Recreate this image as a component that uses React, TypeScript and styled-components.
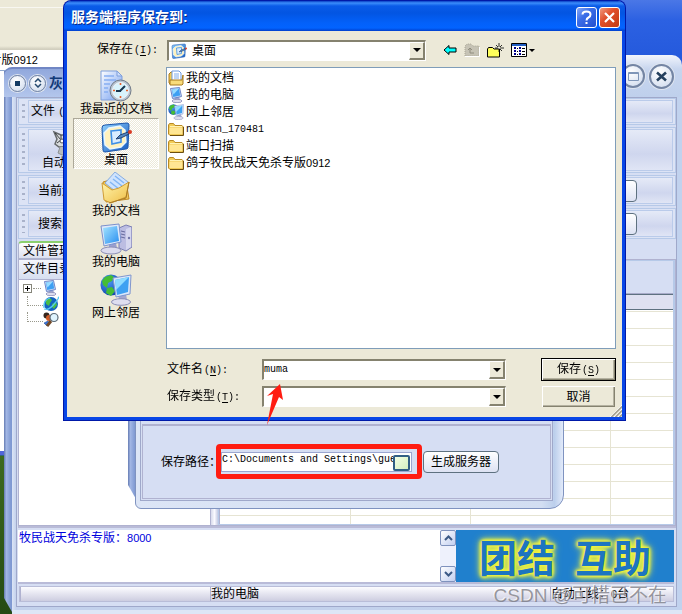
import React from 'react';
import styled, { createGlobalStyle } from 'styled-components';

const Global = createGlobalStyle`
  * { box-sizing: border-box; }
  body { margin: 0; }
  body, button, input, select {
    font-family: 'Liberation Sans', 'Noto Sans CJK SC', sans-serif;
    font-size: 12px;
    line-height: 16px;
    color: #000;
  }
  button, input, select { margin: 0; padding: 0; border: 0; background: none; border-radius: 0; outline: 0; }
  svg { display: block; flex: none; }
`;

/* ---------- shared text ---------- */

const Mono = styled.span`
  font-family: 'Liberation Mono', 'Noto Sans CJK SC', monospace;
  font-size: 10px;
`;
const Num = styled.span`
  font-size: 11px;
`;
const Key = styled(Mono)`
  margin-left: 1px;
  u { text-underline-offset: 2px; }
`;

/* ---------- icons ---------- */

type IconProps = { size?: number };

const RecentIcon = ({ size = 32 }: IconProps) => (
  <svg width={size} height={size} viewBox="0 0 32 32">
    <defs>
      <linearGradient id="rdoc" x1="0" y1="0" x2="1" y2="1">
        <stop offset="0" stopColor="#fff" /><stop offset="1" stopColor="#6f9cf0" />
      </linearGradient>
    </defs>
    <path d="M1 1h16l5 5v24H1z" fill="url(#rdoc)" stroke="#7f9fdc" />
    <path d="M17 1v5h5z" fill="#cfdffc" stroke="#7f9fdc" />
    <path d="M4 6h10M4 10h12M4 14h6M4 18h4M4 22h4" stroke="#86aef2" strokeWidth="1.4" />
    <circle cx="20.500" cy="20.500" r="10.500" fill="#b9c3d0" stroke="#737c88" />
    <circle cx="20.500" cy="20.500" r="8" fill="#d9f3fc" stroke="#eef3f8" />
    <path d="M20 21l5-5M21 21h-5" stroke="#18364f" strokeWidth="2" />
    <path d="M20.500 13v2M20.500 26v2M13 20.500h2M26 20.500h2" stroke="#e8622c" strokeWidth="1.600" />
  </svg>
);

const DesktopIcon = ({ size = 32 }: IconProps) => (
  <svg width={size} height={size} viewBox="0 0 32 32">
    <defs>
      <linearGradient id="dsk" x1="0" y1="0" x2="1" y2="1">
        <stop offset="0" stopColor="#8fd0fc" /><stop offset="1" stopColor="#1459c0" />
      </linearGradient>
    </defs>
    <path d="M5 4l22-2q2 0 2 2l-1 22q0 2-2 2L5 31q-2 0-2-2L2 7q0-3 3-3z" fill="url(#dsk)" stroke="#1b56ad" />
    <path d="M9 7l11-2 5 4 1 12-5 5-11 2-5-4-1-12z" fill="#fff1bd" stroke="#e9f6ff" strokeWidth="1.400" />
    <path d="M11 10l10-1v12l-9 2z" fill="#d9ecff" stroke="#3f8fe6" strokeWidth="1.600" />
    <path d="M16 18l4-4 8-3 1 2-8 4z" fill="#5387c2" stroke="#173566" strokeWidth=".9" />
    <circle cx="30" cy="11" r="2" fill="#d93a24" />
  </svg>
);

const DocsIcon = ({ size = 32 }: IconProps) => (
  <svg width={size} height={size} viewBox="0 0 32 32">
    <defs>
      <linearGradient id="fold" x1="0" y1="0" x2="1" y2="1">
        <stop offset="0" stopColor="#fff6b0" /><stop offset="1" stopColor="#efbd45" />
      </linearGradient>
    </defs>
    <path d="M3 10l7-2 3 3 13-2 3 18-23 3z" fill="#f0c75a" stroke="#c08a26" />
    <path d="M15 0l13 10-8 13L5 11z" fill="#cfe3fd" stroke="#86acdf" />
    <path d="M15 4l9 7M13 7l9 7M10 10l9 7" stroke="#82b6f5" strokeWidth="1.500" />
    <path d="M2 11l10 7 7-2 10-6-3 15-15 6-7-3z" fill="url(#fold)" stroke="#d09c35" />
    <path d="M9 31l17-5 3-16" fill="none" stroke="#a87925" />
  </svg>
);

const ComputerIcon = ({ size = 32 }: IconProps) => (
  <svg width={size} height={size} viewBox="0 0 32 32">
    <defs>
      <linearGradient id="scr" x1="0" y1="0" x2="1" y2="1">
        <stop offset="0" stopColor="#a4e4ff" /><stop offset="1" stopColor="#2a8ff0" />
      </linearGradient>
    </defs>
    <path d="M19 5l7-3 6 2v20l-6 4-7-3z" fill="#bcbde2" stroke="#7c7fb4" />
    <path d="M26 6v21l5-3V4z" fill="#d6d7ef" />
    <path d="M21 8l4 1M21 11l4 1M21 14l4 1" stroke="#65699d" />
    <circle cx="29" cy="15" r="1.200" fill="#7377ab" />
    <path d="M9 20h7l1 5H9z" fill="#9aa0cf" />
    <ellipse cx="11" cy="27.500" rx="10" ry="3.500" fill="#dcdcef" stroke="#8a8db6" />
    <path d="M1 3l18-2 2 18-17 4z" fill="#dfe9fa" stroke="#7c91cc" />
    <path d="M3 5l14-2 2 15-14 3z" fill="url(#scr)" />
  </svg>
);

const MonitorIcon = ({ size = 16 }: IconProps) => (
  <svg width={size} height={size} viewBox="0 0 16 16">
    <path d="M6 10l5-1 1 4H7z" fill="#9ca5d0" />
    <ellipse cx="9" cy="14" rx="5" ry="1.700" fill="#dcdcef" stroke="#8a8db6" strokeWidth=".8" />
    <path d="M2.500 1.500l9-1 2 9-9 2z" fill="#c8dcf8" stroke="#6e86c8" />
    <path d="M4 2.500l7-1 1.200 7-7 1.500z" fill="#3d9ff3" />
    <path d="M4 2.500l7-1-5.500 6z" fill="#98dcff" />
  </svg>
);

const NetworkIcon = ({ size = 32 }: IconProps) => (
  <svg width={size} height={size} viewBox="0 0 32 32">
    <defs>
      <radialGradient id="glb" cx=".35" cy=".3" r=".8">
        <stop offset="0" stopColor="#4d9df5" /><stop offset="1" stopColor="#0b3da8" />
      </radialGradient>
    </defs>
    <circle cx="11" cy="11" r="10.500" fill="url(#glb)" />
    <path d="M5 3l6-2 3 2-2 4-4 2-1 5-4-3-1-4zM7 14l5-1 3 4-4 5-5-3z" fill="#45bd35" />
    <path d="M18 20h8l1 6h-8z" fill="#a3a7d0" />
    <ellipse cx="21" cy="28" rx="9.500" ry="3.300" fill="#dedef0" stroke="#8a8db6" />
    <path d="M13 4l18-3-1 19-14 3z" fill="#dbe8fb" stroke="#8096cd" />
    <path d="M15 6l14-3-1 15-11 3z" fill="#3ea1f2" />
    <path d="M15 6l14-3-13 13z" fill="#8fdcff" />
  </svg>
);

const SmallDocsIcon = () => (
  <svg width="16" height="16" viewBox="0 0 16 16">
    <path d="M1 4l2-2h2v12H2l-1-1z" fill="#f2ca55" stroke="#a87a1f" />
    <path d="M4 1h7l2 2v9H4z" fill="#fff" stroke="#6d9be0" />
    <path d="M6 4h5M6 6h5M6 8h5" stroke="#7fabe9" />
    <path d="M2 10h12l1-5v9l-1 1H2z" fill="#f9dc7b" stroke="#a87a1f" />
  </svg>
);

const FolderIcon = () => (
  <svg width="16" height="16" viewBox="0 0 16 16">
    <path d="M.5 13V4l1-1.500h4l1.500 2h7l1 1v8l-1 1h-12z" fill="#f1cb56" stroke="#b98a25" />
    <path d="M1.500 13V7l1-.5h12V13z" fill="#ffe693" />
    <path d="M2 5.500h12" stroke="#fff3b5" />
    <path d="M2 14.500h13.500V6" fill="none" stroke="#6d4f10" />
  </svg>
);

const GlobeIcon = () => (
  <svg width="16" height="16" viewBox="0 0 16 16">
    <circle cx="8" cy="8" r="7" fill="#1463c2" />
    <path d="M3 4l4-2 2 2-2 3-1 3-3-2zM9 8l4-2 1 3-3 4-2-2z" fill="#49bd45" />
    <path d="M1 13Q6 15 12 7t3-5M1 12q-1-8 6-10" fill="none" stroke="#55c9f2" strokeWidth="1.300" />
  </svg>
);

const SearchUserIcon = () => (
  <svg width="16" height="16" viewBox="0 0 16 16">
    <circle cx="3.500" cy="3.500" r="3" fill="#33251d" />
    <circle cx="6" cy="6" r="3" fill="#cf5b27" />
    <path d="M1 11l4-2 2 3-3 2z" fill="#3977df" stroke="#234b95" strokeWidth=".6" />
    <path d="M8 9l-4 5" stroke="#724a28" strokeWidth="3" />
    <circle cx="11" cy="5.500" r="4" fill="#dff4ff" stroke="#5c6b78" strokeWidth="1.200" />
  </svg>
);

const RobotIcon = () => (
  <svg width="28" height="26" viewBox="0 0 28 26">
    <path d="M2 2l7 3h10l7-3-3 7 2 5-4 3H7l-4-3 2-5z" fill="#d9dcdd" stroke="#65696b" strokeWidth="1.500" />
    <path d="M3 3l6 7-4 3M25 3l-6 7 4 3M9 5v5M19 5v5" fill="none" stroke="#3c4042" />
    <circle cx="10" cy="11" r="2" fill="#fff" stroke="#555" /><circle cx="18" cy="11" r="2" fill="#fff" stroke="#555" />
    <path d="M8 17l-2 6 4 2h8l4-2-2-6" fill="#b7babc" stroke="#8d9193" />
  </svg>
);

const Triangle = () => (
  <svg width="8" height="4" viewBox="0 0 8 4"><path d="M0 0h8L4 4z" fill="#000" /></svg>
);

const BackIcon = () => (
  <svg width="14" height="12" viewBox="0 0 14 12">
    <path d="M1 6l5-4.500V4h7v4H6v2.500z" fill="#0ff" stroke="#000" />
  </svg>
);
const UpIcon = () => (
  <svg width="16" height="14" viewBox="0 0 16 14">
    <path d="M1 13V3l2-2h4l2 2h6v10z" fill="#c6c3b5" stroke="#aaa797" strokeDasharray="1 1" />
    <path d="M6 5v5h4M4 7l2-2 2 2" fill="none" stroke="#8f8c7e" />
    <path d="M1 13.500h14.500V4" fill="none" stroke="#fff" />
  </svg>
);
const NewFolderIcon = () => (
  <svg width="17" height="15" viewBox="0 0 17 15">
    <path d="M.5 14V6l1-1.500h4L7 6h5.500v8z" fill="#ffff5a" stroke="#000" />
    <path d="M12 0v4M12 6v3M8 5h3M13 5h4M9 2l2 2M15 2l-2 2M13 6l2 2" stroke="#000" strokeWidth=".8" />
  </svg>
);
const ViewIcon = () => (
  <svg width="24" height="14" viewBox="0 0 24 14">
    <path d="M.5.5h15v13H.5z" fill="#fff" stroke="#000" />
    <path d="M1 1h14v2H1z" fill="#225fc4" />
    <path d="M3 5h2M3 8h2M3 11h2M8 5h2M8 8h2M8 11h2" stroke="#00008a" strokeWidth="2" />
    <path d="M6 5.500h1M6 8.500h1M6 11.500h1M11 5.500h3M11 8.500h3M11 11.500h3" stroke="#000" />
    <path d="M18 6h6l-3 3z" fill="#000" />
  </svg>
);

/* ---------- desktop ---------- */

const Desktop = styled.main`
  position: relative;
  min-height: 100vh;
  overflow: hidden;
  background: linear-gradient(#4a77e6 0, #2c61e2 20px, #2459dc 60px, #2c5be0 455px, #3d6a1e 456px, #254a14 100%);
`;

const Explorer = styled.section`
  position: absolute;
  left: 0;
  top: 0;
  width: 212px;
  background: #fff;
  border-bottom: 4px solid #5165da;
`;
const ExplorerBar = styled.div`
  height: 50px;
  background: linear-gradient(#ece9d8 0 7px, #f8f7f1 7px 8px, #ece9d8 8px 46px, #d2cfbf 49px);
`;
const ExplorerAddress = styled.div`
  height: 21px;
  border-bottom: 1px solid #8fa7cc;
  display: flex;
  align-items: center;
`;
const ClippedName = styled.div`
  width: 38px;
  overflow: hidden;
  white-space: nowrap;
  display: flex;
  justify-content: flex-end;
`;
const ExplorerPane = styled.div`
  height: 380px;
`;

/* ---------- skinned windows ---------- */

const Shade = styled.div`
  position: absolute;
  left: 0;
  top: 16px;
  bottom: 2px;
  width: 16px;
  background: linear-gradient(90deg, #7288bd 0 1px, #a5b9e6 2px, #7f99d2 7px);
  clip-path: polygon(0 0, 100% 0, 100% 100%, 8px 100%, 0 calc(100% - 14px));
`;

const MainWindow = styled.section`
  position: absolute;
  left: 4px;
  right: 0;
  top: 55px;
  bottom: 0;
  display: flex;
  flex-direction: column;
`;
const MainTitle = styled.header`
  position: relative;
  display: flex;
  align-items: flex-end;
  height: 42px;
`;
const TitleLeft = styled.div`
  flex: 1;
  height: 30px;
  padding: 0 5px;
  display: flex;
  align-items: center;
  gap: 3px;
  border-radius: 8px 0 0 0;
  border-top: 2px solid #7086c4;
  background: linear-gradient(#91a8dc, #b3c6ec);
  font-size: 14px;
  font-weight: bold;
  color: #123a78;
`;
const TitleRight = styled.div`
  height: 42px;
  width: 70px;
  padding-right: 8px;
  display: flex;
  align-items: center;
  justify-content: flex-end;
  gap: 4px;
  border-radius: 0 10px 0 0;
  background: linear-gradient(#f2f5fc, #c7d5ee 14px, #bfd0ec);
`;
const RoundButton = styled.button<{ $d: number }>`
  width: ${p => p.$d}px;
  height: ${p => p.$d}px;
  border-radius: 50%;
  border: ${p => (p.$d > 20 ? 2 : 1)}px solid #7485a3;
  box-shadow: 0 0 0 1px #dfe5ef;
  background: radial-gradient(circle at 40% 30%, #fff, #ccd8ec);
  display: flex;
  align-items: center;
  justify-content: center;
`;
const MainBody = styled.div`
  position: relative;
  flex: 1;
  display: flex;
  flex-direction: column;
  margin-left: 8px;
  padding: 0 5px 3px 4px;
  background: linear-gradient(90deg, #dce5f6, #c3d1ec 4px, #c3d1ec 50%, #c1d2ee);
  border-bottom: 4px solid #dde6f6;
`;
const MainInner = styled.div`
  flex: 1;
  display: flex;
  flex-direction: column;
  border: 1px solid #9fa8ca;
  background: #d6def3;
  padding-left: 1px;
`;

const ToolRow = styled.div<{ $h: number }>`
  height: ${p => p.$h}px;
  display: flex;
  align-items: stretch;
  gap: 3px;
  padding: 1px 2px 1px 3px;
  margin-bottom: 2px;
  border: 1px solid #b6c9e8;
  background: #dce3f5;
`;
const Grip = styled.div`
  width: 3px;
  margin: 4px 0;
  background: repeating-linear-gradient(#a9b2ca 0 2px, transparent 2px 6px);
`;
const ToolPanel = styled.div<{ $pad: number }>`
  flex: 1;
  display: flex;
  align-items: center;
  justify-content: space-between;
  padding: 0 35px 0 ${p => p.$pad}px;
  border: 1px solid #bacbea;
  background: linear-gradient(#e5eaf7, #cfd6ee 60%, #e0e5f5);
`;
const ToolButton = styled.button`
  display: flex;
  flex-direction: column;
  align-items: center;
  line-height: 14px;
`;
const SkinButton = styled.button<{ $w: number }>`
  width: ${p => p.$w}px;
  height: 22px;
  border: 1px solid #5e7180;
  border-radius: 4px;
  background: linear-gradient(#fff, #dde2f3);
  white-space: nowrap;
`;

const Tabs = styled.div`
  display: flex;
  height: 18px;
`;
const Tab = styled.button`
  width: 66px;
  text-align: left;
  padding-left: 4px;
  border: 1px solid #aeb4cf;
  border-top: 2px solid #8bd06e;
  border-radius: 4px 4px 0 0;
  background: linear-gradient(#fff, #dcdfef);
`;
const Split = styled.div`
  flex: 1;
  min-height: 260px;
  display: flex;
  border: 1px solid #b0b2d0;
  margin-bottom: 4px;
  box-shadow: 0 2px #b9bbd8;
`;
const TreePane = styled.div`
  width: 192px;
  border-right: 1px solid #b0b2d0;
  background: #fff;
`;
const TreeHeader = styled.div`
  height: 20px;
  padding: 1px 4px;
  border-bottom: 1px solid #b0b2d0;
  background: linear-gradient(#f4f6fc, #d6def0);
`;
const Tree = styled.ul`
  list-style: none;
  margin: 0 0 0 8px;
  padding: 0;
`;
const TreeRow = styled.li`
  height: 16px;
  display: flex;
  align-items: center;
  &::before {
    content: '';
    width: 15px;
    height: 9px;
    align-self: flex-start;
    border-left: 1px dotted #99998c;
    border-bottom: 1px dotted #99998c;
  }
`;
const TreeRoot = styled.li`
  height: 16px;
  display: flex;
  align-items: center;
  margin-left: -4px;
  gap: 1px;
`;
const Expand = styled.button`
  width: 9px;
  height: 9px;
  border: 1px solid #85857a;
  background: linear-gradient(#000, #000) 1px 3px / 5px 1px no-repeat, linear-gradient(#000, #000) 3px 1px / 1px 5px no-repeat, #fff;
`;
const Dots = styled.span`
  width: 8px;
  border-top: 1px dotted #99998c;
`;
const Splitter = styled.div`
  width: 7px;
  background: linear-gradient(90deg, #d8dbec, #fafaff, #c3c9e2);
`;
const ListPane = styled.div`
  flex: 1;
  display: flex;
  flex-direction: column;
  border: 1px solid #b6c9e8;
  border-width: 1px 2px 1px 1px;
`;
const ListTools = styled.div`
  height: 33px;
  border-bottom: 1px solid #a8abc9;
`;
const Grid = styled.div`
  flex: 1;
  border-left: 1px solid #b0b2d0;
  background:
    linear-gradient(#e6e4d3, #e6e4d3) 130px 0 / 1px 100% no-repeat,
    linear-gradient(#e6e4d3, #e6e4d3) 250px 0 / 1px 100% no-repeat,
    linear-gradient(#e6e4d3, #e6e4d3) 390px 0 / 1px 100% no-repeat,
    repeating-linear-gradient(#fff 0 1px, #e6e4d3 1px 2px, #fff 2px 17px);
`;
const GridHead = styled.div`
  height: 16px;
  border-top: 1px solid #5e7180;
  border-bottom: 1px solid #5e7180;
  background: #dfe1f1;
`;

const LogRow = styled.div`
  display: flex;
  height: 52px;
  margin-right: 2px;
  box-shadow: 0 2px #b9bbd8;
`;
const Log = styled.output`
  flex: 1;
  background: #fff;
  color: #00d;
  padding: 0 1px;
`;
const Scroll = styled.div`
  width: 16px;
  display: flex;
  flex-direction: column;
  justify-content: space-between;
  background: #eef1fc;
`;
const ScrollButton = styled.button`
  height: 16px;
  border: 1px solid #7f92bd;
  border-radius: 2px;
  background: linear-gradient(135deg, #fff, #c2cff0);
  display: flex;
  align-items: center;
  justify-content: center;
`;
const Banner = styled.div`
  width: 218px;
  display: flex;
  align-items: center;
  justify-content: center;
  gap: 20px;
  background: #2080cd;
  color: #1d75c0;
  font: 700 38px/52px 'Noto Sans CJK SC', sans-serif;
  text-shadow: 0 0 3px #f4f43c, 0 0 3px #f4f43c, 0 0 4px #f4f43c, 0 0 5px #f0f440, 0 0 7px #e8f048, 0 0 10px #d4e860;
`;
const Status = styled.footer`
  display: flex;
  height: 16px;
  margin: 4px 2px 4px 1px;
  border: 1px solid #b9bdd8;
  background: linear-gradient(#fcfcff, #cdcde0);
`;
const Cell = styled.div<{ $w?: number }>`
  ${p => (p.$w ? `width: ${p.$w}px;` : 'flex: 1;')}
  line-height: 15px;
  border-left: 1px solid #b0b2d0;
  white-space: nowrap;
`;

/* ---------- server configuration window ---------- */

const ConfigWindow = styled.section`
  position: absolute;
  left: 128px;
  right: 118px;
  top: 379px;
`;
const ConfigShade = styled(Shade)`
  top: 0;
  bottom: 10px;
`;
const ConfigBody = styled.div`
  position: relative;
  margin-left: 7px;
  padding: 0 10px 7px 4px;
  border: 1px solid #7f93c0;
  border-radius: 0 0 14px 6px;
  background: linear-gradient(90deg, #dce5f6, #d2def2 95%, #bccfec 98%, #e2eafa);
`;
const ConfigPanel = styled.div`
  border: 1px solid #9fa8ca;
  padding: 43px 1px 1px;
  background: #d6def3;
`;
const SaveRow = styled.div`
  height: 75px;
  display: flex;
  align-items: center;
  padding-left: 18px;
  border: 1px solid #b0b2d0;
  border-top-width: 2px;
`;
const Marked = styled.div`
  position: relative;
  margin-right: 11px;
  &::after {
    content: '';
    position: absolute;
    inset: -8px -10px -7px -5px;
    border: 5px solid #ff1c11;
    border-radius: 4px;
    pointer-events: none;
  }
`;
const PathBox = styled.div`
  width: 191px;
  height: 20px;
  display: flex;
  border: 1px solid #9ba6d0;
  background: #fff;
`;
const PathInput = styled.input`
  flex: 1;
  min-width: 0;
  height: 14px;
  font-family: 'Liberation Mono', monospace;
  font-size: 10px;
`;
const PickButton = styled.button`
  width: 17px;
  height: 16px;
  margin: 2px 1px 0 0;
  border: 2px solid #315f85;
  border-radius: 2px;
  background: linear-gradient(135deg, #f3ffe4, #d3efc0);
`;

/* ---------- save dialog ---------- */

const Dialog = styled.section`
  position: absolute;
  left: 64px;
  right: 57px;
  top: 1px;
  border: solid #0846e6;
  border-width: 0 3px 3px;
  border-radius: 7px 7px 0 0;
  background: #ece9d8;
  box-shadow: 0 0 0 1px #0019a8;
`;
const DialogTitle = styled.header`
  height: 30px;
  margin: 0 -3px;
  padding: 2px 5px 0 7px;
  display: flex;
  align-items: center;
  gap: 2px;
  border-radius: 7px 7px 0 0;
  background: linear-gradient(#0a3fc4 0, #3b8dfb 2px, #0a5be8 5px, #0355e2 12px, #0361fa 22px, #0263ff 27px, #0140cc 30px);
  color: #fff;
  text-shadow: 1px 1px #0b2a88;
`;
const DialogName = styled.h1`
  flex: 1;
  margin: 0;
  font-size: 14px;
`;
const CaptionButton = styled.button<{ $red?: boolean }>`
  width: 21px;
  height: 21px;
  display: flex;
  align-items: center;
  justify-content: center;
  border: 1px solid #fff;
  border-radius: 3px;
  background: ${p => (p.$red ? 'linear-gradient(135deg, #f09a80, #e0502c 40%, #c23a12)' : 'linear-gradient(135deg, #86a8f6, #3a6de8 40%, #2350cf)')};
`;
const DialogBody = styled.div`
  position: relative;
  padding: 8px 6px 9px;
`;
const LookRow = styled.div`
  display: flex;
  align-items: center;
  height: 22px;
  margin-bottom: 6px;
`;
const LookLabel = styled.label`
  width: 94px;
  padding-right: 9px;
  text-align: right;
`;
const Combo = styled.div`
  height: 21px;
  display: flex;
  align-items: center;
  gap: 5px;
  border: 2px solid #85826f;
  border-right: 1px solid #fff;
  border-bottom: 1px solid #fff;
  background: #fff;
  select, input { appearance: none; flex: 1; min-width: 0; height: 16px; }
`;
const LookCombo = styled(Combo)`
  flex: 0 1 259px;
  padding-left: 2px;
`;
const FileInput = styled.input`
  font-family: 'Liberation Mono', monospace;
  font-size: 10px;
`;
const DropArrow = styled.span`
  width: 16px;
  height: 100%;
  display: flex;
  align-items: center;
  justify-content: center;
  border: 1px solid #fff;
  border-right: 2px solid #85826f;
  border-bottom: 2px solid #85826f;
  background: #ece9d8;
`;
const Tools = styled.div`
  display: flex;
  align-items: center;
  gap: 7px;
  margin-left: 17px;
  button { display: flex; }
`;
const Columns = styled.div`
  display: flex;
  gap: 7px;
`;
const Places = styled.nav`
  width: 86px;
  display: flex;
  flex-direction: column;
`;
const Place = styled.button<{ $on?: boolean }>`
  height: 51px;
  display: flex;
  flex-direction: column;
  align-items: center;
  padding-top: 2px;
  line-height: 14px;
  white-space: nowrap;
  border: 1px solid ${p => (p.$on ? '#aca899' : 'transparent')};
  border-right-color: ${p => (p.$on ? '#fff' : 'transparent')};
  border-bottom-color: ${p => (p.$on ? '#fff' : 'transparent')};
  background: ${p => (p.$on ? 'repeating-conic-gradient(#fff 0 25%, #ece9d8 0 50%) 0 0 / 2px 2px' : 'none')};
`;
const Right = styled.div`
  flex: 1;
  min-width: 0;
`;
const Files = styled.ul`
  margin: 0;
  padding: 1px;
  min-height: 282px;
  list-style: none;
  border: 1px solid #7f9db9;
  background: #fff;
`;
const FileRow = styled.li`
  display: flex;
  align-items: center;
  gap: 2px;
  height: 17px;
`;
const Form = styled.form`
  display: grid;
  grid-template-columns: 96px minmax(0, 244px) 1fr;
  align-items: center;
  row-gap: 4px;
  margin-top: 9px;
  label { padding-left: 1px; }
`;
const Push = styled.button<{ $main?: boolean }>`
  width: 75px;
  height: 23px;
  justify-self: end;
  border: 1px solid ${p => (p.$main ? '#000' : '#ece9d8')};
  box-shadow: inset 1px 1px #fff, inset -1px -1px #85826f, inset -2px -2px #b5b2a1;
  background: #ece9d8;
`;
const Corner = styled.svg`
  position: absolute;
  right: 0;
  bottom: 0;
`;

/* ---------- annotations ---------- */

const Arrow = styled.svg`
  position: absolute;
  left: 265px;
  top: 384px;
`;
const Watermark = styled.div`
  position: absolute;
  right: 15px;
  bottom: 5px;
  font-size: 19px;
  line-height: 26px;
  color: rgba(120, 120, 128, 0.75);
  text-shadow: -1px -1px rgba(255, 255, 255, 0.7);
  pointer-events: none;
`;

const files: { icon: React.ReactNode; name: React.ReactNode }[] = [
  { icon: <SmallDocsIcon />, name: '我的文档' },
  { icon: <MonitorIcon />, name: '我的电脑' },
  { icon: <NetworkIcon size={16} />, name: '网上邻居' },
  { icon: <FolderIcon />, name: <Mono>ntscan_170481</Mono> },
  { icon: <FolderIcon />, name: '端口扫描' },
  { icon: <FolderIcon />, name: <>鸽子牧民战天免杀专版<Num>0912</Num></> },
];

const places = [
  { icon: <RecentIcon />, name: '我最近的文档' },
  { icon: <DesktopIcon />, name: '桌面', on: true },
  { icon: <DocsIcon />, name: '我的文档' },
  { icon: <ComputerIcon />, name: '我的电脑' },
  { icon: <NetworkIcon />, name: '网上邻居' },
];

function ManagerWindow() {
  return (
    <MainWindow>
      <Shade />
      <MainTitle>
        <TitleLeft>
          <RoundButton $d={17} aria-label="菜单">
            <svg width="5" height="5"><path d="M0 0h5v5H0z" fill="#123a63" /></svg>
          </RoundButton>
          <RoundButton $d={17} aria-label="置顶">
            <svg width="8" height="10" viewBox="0 0 8 10"><path d="M1 4l3-3 3 3M1 6l3 3 3-3" fill="none" stroke="#24486e" strokeWidth="1.500" /></svg>
          </RoundButton>
          灰
        </TitleLeft>
        <TitleRight>
          <RoundButton $d={24} aria-label="最大化">
            <svg width="11" height="9"><path d="M.5.5h10v8H.5zM1 1.500h9" fill="none" stroke="#7f96b8" /></svg>
          </RoundButton>
          <RoundButton $d={25} aria-label="关闭">
            <svg width="11" height="11" viewBox="0 0 11 11"><path d="M1 1.500l9 8M10 1.500l-9 8" stroke="#24405e" strokeWidth="2.600" /></svg>
          </RoundButton>
        </TitleRight>
      </MainTitle>
      <MainBody>
        <MainInner>
          <ToolRow $h={27}><Grip /><ToolPanel $pad={2}><span>文件 <Mono>(F)</Mono></span></ToolPanel></ToolRow>
          <ToolRow $h={46}>
            <Grip />
            <ToolPanel $pad={13}><ToolButton><RobotIcon />自动上线</ToolButton></ToolPanel>
          </ToolRow>
          <ToolRow $h={31}><Grip /><ToolPanel $pad={9}>当前连接<SkinButton $w={60} aria-label="连接" /></ToolPanel></ToolRow>
          <ToolRow $h={31}><Grip /><ToolPanel $pad={9}>搜索内容<SkinButton $w={60} aria-label="搜索" /></ToolPanel></ToolRow>
          <Tabs><Tab>文件管理</Tab></Tabs>
          <Split>
            <TreePane>
              <TreeHeader>文件目录</TreeHeader>
              <Tree>
                <TreeRoot><Expand aria-label="展开" /><Dots /><MonitorIcon /></TreeRoot>
                <TreeRow><GlobeIcon /></TreeRow>
                <TreeRow><SearchUserIcon /></TreeRow>
              </Tree>
            </TreePane>
            <Splitter />
            <ListPane>
              <ListTools />
              <GridHead />
              <Grid />
            </ListPane>
          </Split>
          <LogRow>
            <Log>牧民战天免杀专版：<Num>8000</Num></Log>
            <Scroll>
              <ScrollButton aria-label="向上">
                <svg width="9" height="6"><path d="M1 5l3.500-3.500L8 5" fill="none" stroke="#3c5a86" strokeWidth="2" /></svg>
              </ScrollButton>
              <ScrollButton aria-label="向下">
                <svg width="9" height="6"><path d="M1 1l3.500 3.500L8 1" fill="none" stroke="#3c5a86" strokeWidth="2" /></svg>
              </ScrollButton>
            </Scroll>
            <Banner><span>团结</span><span>互助</span></Banner>
          </LogRow>
          <Status>
            <Cell $w={190} />
            <Cell>我的电脑</Cell>
            <Cell $w={123}>自动上线：<Num>0</Num>台</Cell>
          </Status>
        </MainInner>
      </MainBody>
    </MainWindow>
  );
}

function ServerConfig() {
  return (
    <ConfigWindow>
      <ConfigShade />
      <ConfigBody>
        <ConfigPanel>
          <SaveRow>
            <label htmlFor="path">保存路径：</label>
            <Marked>
              <PathBox>
                <PathInput id="path" defaultValue="C:\Documents and Settings\guest" />
                <PickButton aria-label="选择路径" />
              </PathBox>
            </Marked>
            <SkinButton $w={76}>生成服务器</SkinButton>
          </SaveRow>
        </ConfigPanel>
      </ConfigBody>
    </ConfigWindow>
  );
}

function SaveDialog() {
  return (
    <Dialog role="dialog" aria-labelledby="save-title">
      <DialogTitle>
        <DialogName id="save-title">服务端程序保存到:</DialogName>
        <CaptionButton aria-label="帮助">
          <svg width="13" height="15" viewBox="0 0 13 15">
            <path d="M2.500 4.500q0-3 4-3t4 3q0 2-2 3t-2 3M6.500 12v2" fill="none" stroke="#fff" strokeWidth="2" />
          </svg>
        </CaptionButton>
        <CaptionButton $red aria-label="关闭">
          <svg width="13" height="13" viewBox="0 0 13 13"><path d="M2 2l9 9M11 2l-9 9" stroke="#fff" strokeWidth="2.200" /></svg>
        </CaptionButton>
      </DialogTitle>
      <DialogBody>
        <LookRow>
          <LookLabel htmlFor="look">保存在<Key>(<u>I</u>):</Key></LookLabel>
          <LookCombo>
            <DesktopIcon size={16} />
            <select id="look" defaultValue="桌面"><option>桌面</option></select>
            <DropArrow><Triangle /></DropArrow>
          </LookCombo>
          <Tools>
            <button aria-label="后退"><BackIcon /></button>
            <button aria-label="向上一级" disabled><UpIcon /></button>
            <button aria-label="新建文件夹"><NewFolderIcon /></button>
            <button aria-label="查看"><ViewIcon /></button>
          </Tools>
        </LookRow>
        <Columns>
          <Places>
            {places.map(p => <Place key={p.name} $on={p.on}>{p.icon}{p.name}</Place>)}
          </Places>
          <Right>
            <Files>
              {files.map((f, i) => <FileRow key={i}>{f.icon}<span>{f.name}</span></FileRow>)}
            </Files>
            <Form onSubmit={e => e.preventDefault()}>
              <label htmlFor="fname">文件名<Key>(<u>N</u>):</Key></label>
              <Combo>
                <FileInput id="fname" defaultValue="muma" autoFocus />
                <DropArrow><Triangle /></DropArrow>
              </Combo>
              <Push $main>保存<Key>(<u>S</u>)</Key></Push>
              <label htmlFor="ftype">保存类型<Key>(<u>T</u>):</Key></label>
              <Combo>
                <select id="ftype"><option></option></select>
                <DropArrow><Triangle /></DropArrow>
              </Combo>
              <Push type="button">取消</Push>
            </Form>
          </Right>
        </Columns>
        <Corner width="12" height="12" viewBox="0 0 12 12">
          <path d="M0 12L12 0M4 12l8-8M8 12l4-4" stroke="#fff" />
          <path d="M1.500 12L12 1.500M5.500 12L12 5.500M9.500 12L12 9.500" stroke="#a5a292" strokeWidth="1.600" />
        </Corner>
      </DialogBody>
    </Dialog>
  );
}

export default function App() {
  return (
    <Desktop>
      <Global />
      <Explorer>
        <ExplorerBar />
        <ExplorerAddress><ClippedName>专版<Num>0912</Num></ClippedName></ExplorerAddress>
        <ExplorerPane />
      </Explorer>
      <ManagerWindow />
      <ServerConfig />
      <SaveDialog />
      <Arrow width="20" height="42" viewBox="0 0 20 42">
        <path d="M15 0l3 16-4-3L2 41 8 10l-6 2z" fill="#ff1c11" />
      </Arrow>
      <Watermark>CSDN @可惜已不在</Watermark>
    </Desktop>
  );
}
